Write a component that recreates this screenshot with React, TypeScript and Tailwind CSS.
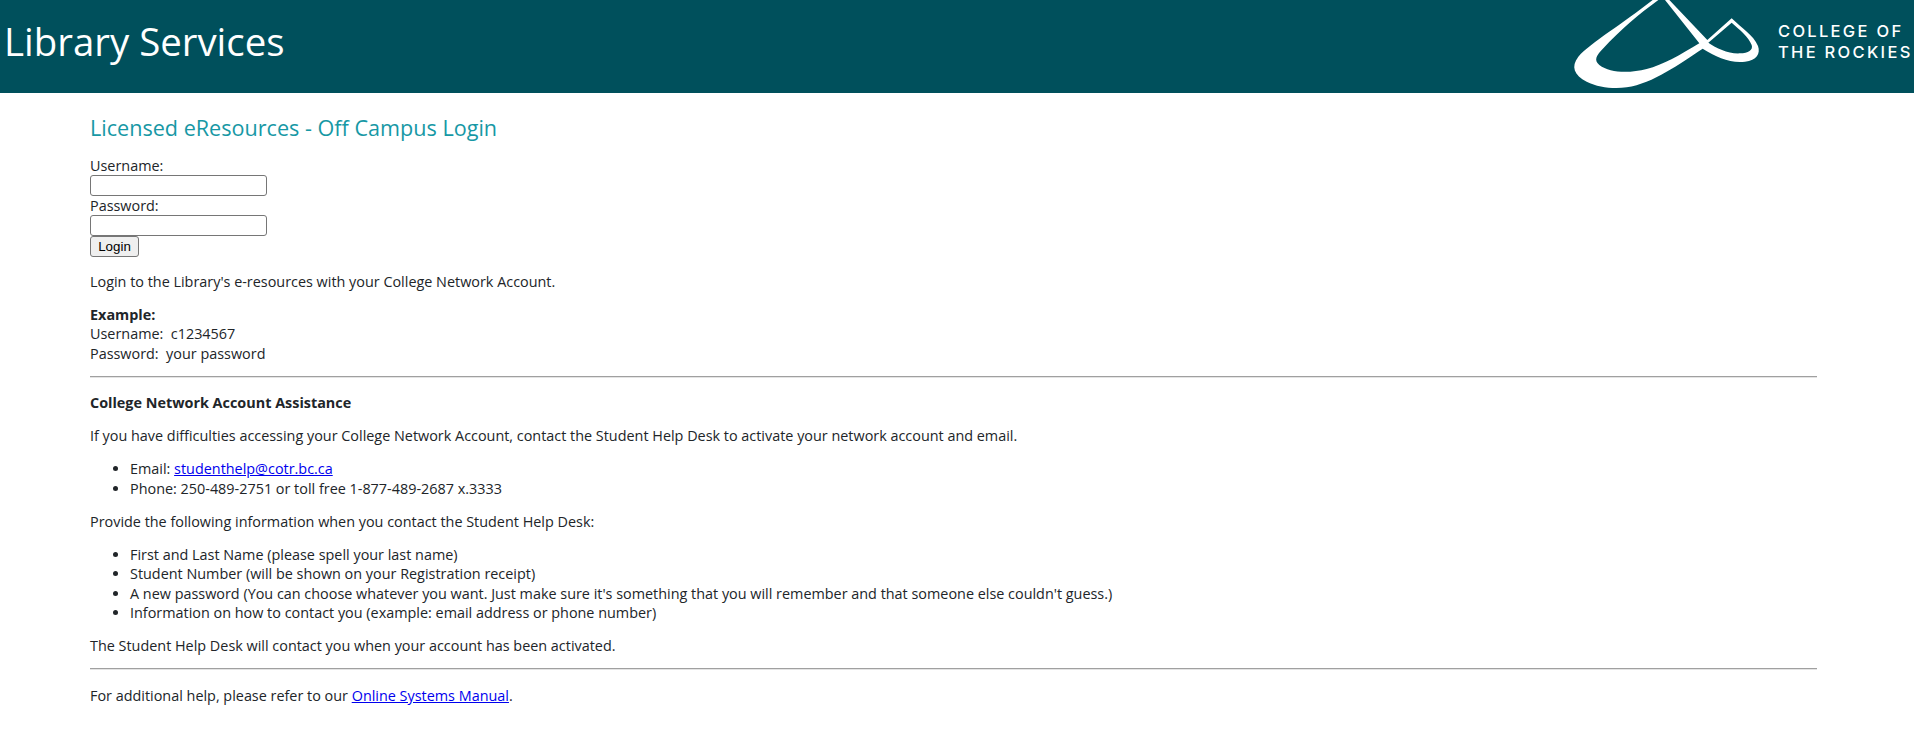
const Logo = () => (
  <div className="flex items-start h-full">
    <svg width="223" height="93" viewBox="0 0 669 279">
      <path
        fill="#ffffff"
        fillRule="evenodd"
        d="M338 0 C250 70 150 130 115 170 C92 200 102 225 140 245 C175 262 220 268 260 262 C340 250 420 190 488 146 C530 172 570 190 615 185 C650 182 662 160 654 138 C640 105 605 85 575 55 L502 120 L388 0 L375 0 L478 130 C420 165 370 195 320 207 C270 220 210 220 178 195 C160 180 170 165 190 145 C240 90 300 40 355 0 Z M505 128 L575 68 C600 90 625 110 635 135 C640 150 625 160 600 160 C565 162 530 145 505 128 Z"
      />
    </svg>
    <div className="ml-[15px] pt-[21px] font-['Inter',sans-serif] text-[16.5px] font-medium leading-[21px] tracking-[2.3px] text-white whitespace-nowrap w-[136px]">
      <div>COLLEGE OF</div>
      <div>THE ROCKIES</div>
    </div>
  </div>
);

const App = () => {
  return (
    <div className="min-h-[735px] bg-white font-['Open_Sans',sans-serif] text-[14.4px] leading-[19.5px] text-[#212529]">
      <header className="flex h-[93px] justify-between overflow-hidden bg-[#00505c]">
        <h1 className="pl-[4px] pt-[15px] text-[38.4px] leading-[52px] text-white">Library Services</h1>
        <Logo />
      </header>
      <main className="ml-[90px] w-[1727px] pt-[20px]">
        <h2 className="text-[21.6px] leading-[30px] text-[#1798a5]">Licensed eResources - Off Campus Login</h2>
        <form className="mt-[12px]">
          <div className="pt-px">Username:</div>
          <input type="text" className="mt-[-1px] block h-[21px] w-[177px] rounded-[3px] border border-[#767676] bg-white" />
          <div>Password:</div>
          <input type="password" className="block h-[21px] w-[177px] rounded-[3px] border border-[#767676] bg-white" />
          <button type="button" className="block h-[21px] w-[49px] rounded-[3px] border border-[#767676] bg-[#efefef] font-['Liberation_Sans',sans-serif] text-[13.33px] leading-[15px] text-black">Login</button>
        </form>
        <p className="mt-[15px]">Login to the Library's e-resources with your College Network Account.</p>
        <p className="mt-[13px]">
          <strong className="font-bold">Example:</strong>
          <br />
          Username:&nbsp; c1234567
          <br />
          Password:&nbsp; your password
        </p>
        <hr className="mt-[13px] border-t border-b border-t-[#a0a0a0] border-b-[#e4e4e4]" />
        <p className="mt-[15px] font-bold">College Network Account Assistance</p>
        <p className="mt-[13px]">If you have difficulties accessing your College Network Account, contact the Student Help Desk to activate your network account and email.</p>
        <ul className="mt-[14px] list-disc pl-[40px]">
          <li>Email: <a href="#" className="text-[#0000ee] underline">studenthelp@cotr.bc.ca</a></li>
          <li>Phone: 250-489-2751 or toll free 1-877-489-2687 x.3333</li>
        </ul>
        <p className="mt-[14px]">Provide the following information when you contact the Student Help Desk:</p>
        <ul className="mt-[13px] list-disc pl-[40px]">
          <li>First and Last Name (please spell your last name)</li>
          <li>Student Number (will be shown on your Registration receipt)</li>
          <li>A new password (You can choose whatever you want. Just make sure it's something that you will remember and that someone else couldn't guess.)</li>
          <li>Information on how to contact you (example: email address or phone number)</li>
        </ul>
        <p className="mt-[13px]">The Student Help Desk will contact you when your account has been activated.</p>
        <hr className="mt-[13px] border-t border-b border-t-[#a0a0a0] border-b-[#e4e4e4]" />
        <p className="mt-[16px]">For additional help, please refer to our <a href="#" className="text-[#0000ee] underline">Online Systems Manual</a>.</p>
      </main>
    </div>
  );
};

export default App;
